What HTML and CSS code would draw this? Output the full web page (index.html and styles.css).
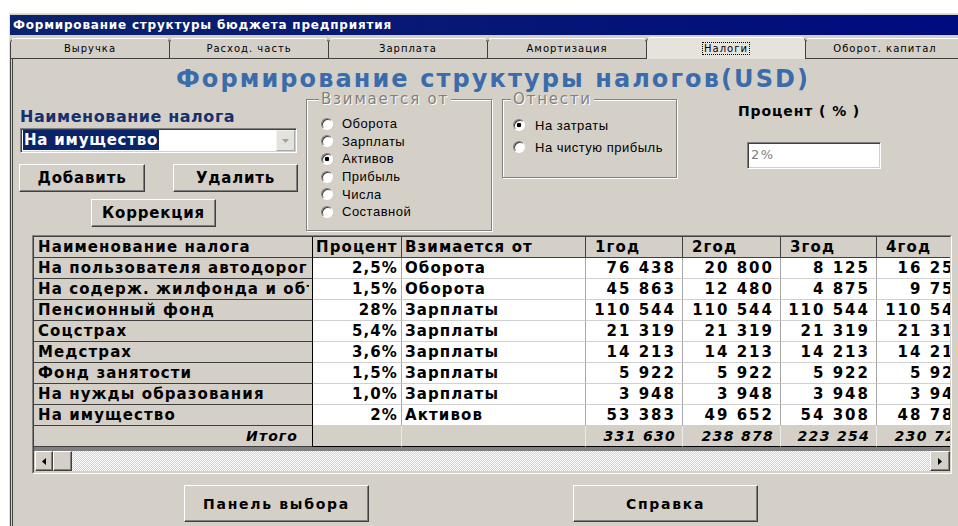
FILE: index.html
```html
<!DOCTYPE html>
<html lang="ru">
<head>
<meta charset="utf-8">
<title>Формирование структуры бюджета предприятия</title>
<link rel="stylesheet" href="styles.css">
</head>
<body>
<div class="window">
  <div class="titlebar">Формирование структуры бюджета предприятия</div>

  <div class="tabs">
    <div class="tab">Выручка</div>
    <div class="tab">Расход. часть</div>
    <div class="tab">Зарплата</div>
    <div class="tab">Амортизация</div>
    <div class="tab active"><span class="focus">Налоги</span></div>
    <div class="tab">Оборот. капитал</div>
  </div>

  <div class="panel">
    <h1 class="heading">Формирование структуры налогов(USD)</h1>

    <div class="controls">
      <div class="tax">
        <div class="tax-label">Наименование налога</div>
        <div class="combo">
          <span class="combo-text">На имущество</span>
          <span class="combo-btn">
            <svg width="7" height="4" viewBox="0 0 7 4"><path d="M0 0h7L3.5 4z" fill="#a0a0a0"/></svg>
          </span>
        </div>
        <div class="btn-row">
          <button type="button" class="btn btn-add">Добавить</button>
          <button type="button" class="btn btn-del">Удалить</button>
        </div>
        <button type="button" class="btn btn-fix">Коррекция</button>
      </div>

      <fieldset class="group group-base">
        <legend>Взимается от</legend>
        <div class="radio"><span class="mark"></span>Оборота</div>
        <div class="radio"><span class="mark"></span>Зарплаты</div>
        <div class="radio checked"><span class="mark"></span>Активов</div>
        <div class="radio"><span class="mark"></span>Прибыль</div>
        <div class="radio"><span class="mark"></span>Числа</div>
        <div class="radio"><span class="mark"></span>Составной</div>
      </fieldset>

      <fieldset class="group group-target">
        <legend>Отнести</legend>
        <div class="radio checked"><span class="mark"></span>На затраты</div>
        <div class="radio"><span class="mark"></span>На чистую прибыль</div>
      </fieldset>

      <div class="percent">
        <div class="percent-label">Процент ( % )</div>
        <div class="percent-input">2%</div>
      </div>
    </div>

    <div class="grid">
      <div class="grid-inner">
        <div class="grid-view">
          <table class="taxes">
            <colgroup>
              <col class="c-name"><col class="c-pct"><col class="c-base">
              <col class="c-y1"><col class="c-y2"><col class="c-y3"><col class="c-y4">
            </colgroup>
            <thead>
              <tr>
                <th class="fixed">Наименование налога</th>
                <th>Процент</th>
                <th>Взимается от</th>
                <th class="year">1год</th>
                <th class="year">2год</th>
                <th class="year">3год</th>
                <th class="year">4год</th>
              </tr>
            </thead>
            <tbody>
              <tr><td class="fixed"><div class="cell-clip">На пользователя автодорог</div></td><td class="pct">2,5%</td><td>Оборота</td><td class="num">76 438</td><td class="num">20 800</td><td class="num">8 125</td><td class="num">16 250</td></tr>
              <tr><td class="fixed"><div class="cell-clip">На содерж. жилфонда и объектов</div></td><td class="pct">1,5%</td><td>Оборота</td><td class="num">45 863</td><td class="num">12 480</td><td class="num">4 875</td><td class="num">9 750</td></tr>
              <tr><td class="fixed">Пенсионный фонд</td><td class="pct">28%</td><td>Зарплаты</td><td class="num">110 544</td><td class="num">110 544</td><td class="num">110 544</td><td class="num">110 544</td></tr>
              <tr><td class="fixed">Соцстрах</td><td class="pct">5,4%</td><td>Зарплаты</td><td class="num">21 319</td><td class="num">21 319</td><td class="num">21 319</td><td class="num">21 319</td></tr>
              <tr><td class="fixed">Медстрах</td><td class="pct">3,6%</td><td>Зарплаты</td><td class="num">14 213</td><td class="num">14 213</td><td class="num">14 213</td><td class="num">14 213</td></tr>
              <tr><td class="fixed">Фонд занятости</td><td class="pct">1,5%</td><td>Зарплаты</td><td class="num">5 922</td><td class="num">5 922</td><td class="num">5 922</td><td class="num">5 922</td></tr>
              <tr><td class="fixed">На нужды образования</td><td class="pct">1,0%</td><td>Зарплаты</td><td class="num">3 948</td><td class="num">3 948</td><td class="num">3 948</td><td class="num">3 948</td></tr>
              <tr><td class="fixed">На имущество</td><td class="pct">2%</td><td>Активов</td><td class="num">53 383</td><td class="num">49 652</td><td class="num">54 308</td><td class="num">48 780</td></tr>
            </tbody>
            <tfoot>
              <tr><td class="fixed total-label">Итого</td><td></td><td></td><td class="num">331 630</td><td class="num">238 878</td><td class="num">223 254</td><td class="num">230 726</td></tr>
            </tfoot>
          </table>
        </div>
        <div class="hscroll">
          <span class="sb-btn sb-left">
            <svg width="4" height="7" viewBox="0 0 4 7"><path d="M4 0v7L0 3.5z" fill="#000"/></svg>
          </span>
          <span class="sb-thumb"></span>
          <span class="sb-track"></span>
          <span class="sb-btn sb-right">
            <svg width="4" height="7" viewBox="0 0 4 7"><path d="M0 0v7l4-3.5z" fill="#000"/></svg>
          </span>
        </div>
      </div>
    </div>

    <div class="footer">
      <button type="button" class="btn btn-wide">Панель выбора</button>
      <button type="button" class="btn btn-wide">Справка</button>
    </div>
  </div>
</div>
</body>
</html>
```

FILE: styles.css
```css
* {
  box-sizing: border-box;
}

html,
body {
  margin: 0;
  padding: 0;
}

body {
  width: 958px;
  height: 526px;
  overflow: hidden;
  background: #fff;
  font-family: "Liberation Sans", Arial, sans-serif;
  color: #000;
}

/* ---------- window frame ---------- */
.window {
  display: flex;
  flex-direction: column;
  width: 966px;
  height: 513px;
  margin: 13px 0 0 9px;
  padding-top: 1px;
  background: #d4d0c8;
  border-top: 1px solid #e4e1da;
  border-left: 1px solid #e4e1da;
}

.titlebar {
  height: 20px;
  padding-left: 3px;
  background: linear-gradient(90deg, #0c236c, #000a80);
  color: #fff;
  font: bold 12px/20px "DejaVu Sans", sans-serif;
  letter-spacing: 0.8px;
  white-space: nowrap;
}

/* ---------- tab strip ---------- */
.tabs {
  display: flex;
  align-items: flex-end;
  width: 955px;
  height: 24px;
}

.tab {
  flex: 1;
  height: 21px;
  border: 1px solid #404040;
  border-top-color: #fff;
  border-radius: 5px 5px 0 0;
  font: 10px/19px "DejaVu Sans", sans-serif;
  letter-spacing: 1px;
  text-align: center;
  white-space: nowrap;
}

.tab + .tab {
  margin-left: -1px;
}

.tab.active {
  height: 22px;
  border-bottom: none;
  background: #e6e3dc;
  line-height: 21px;
}

.focus {
  outline: 1px dotted #000;
  outline-offset: 0;
  padding: 0 1px;
}

/* ---------- page panel ---------- */
.panel {
  flex: 1;
  border-left: 3px double #404040;
  padding-left: 6px;
}

.heading {
  margin: 7px 8px 0 0;
  height: 26px;
  color: #3a6cab;
  font: bold 24px/26px "DejaVu Sans", sans-serif;
  letter-spacing: 2.1px;
  text-align: center;
  white-space: nowrap;
}

.controls {
  display: flex;
  align-items: flex-start;
  height: 139px;
}

/* tax selector column */
.tax {
  width: 279px;
  margin-top: 16px;
}

.tax-label {
  padding-left: 1px;
  color: #17306e;
  font: bold 16px/18px "DejaVu Sans", sans-serif;
  letter-spacing: 0.55px;
  white-space: nowrap;
}

.combo {
  display: flex;
  width: 277px;
  height: 25px;
  margin: 2px 0 0 1px;
  padding: 1px;
  background: #fff;
  border: 1px solid;
  border-color: #808080 #fff #fff #808080;
  box-shadow: inset 1px 1px 0 #404040, inset -1px -1px 0 #d4d0c8;
}

.combo-text {
  height: 20px;
  margin: 0 0 0 1px;
  padding: 0 1px;
  background: #0a246a;
  color: #fff;
  font: bold 15px/20px "DejaVu Sans", sans-serif;
  letter-spacing: 0.8px;
  white-space: nowrap;
}

.combo-btn {
  display: flex;
  align-items: center;
  justify-content: center;
  width: 19px;
  height: 21px;
  margin-left: auto;
  background: #e4e2dd;
  border: 1px solid;
  border-color: #f4f3f0 #a8a8a8 #a8a8a8 #f4f3f0;
}

.btn {
  display: flex;
  align-items: center;
  justify-content: center;
  margin: 0;
  padding: 0;
  background: #d4d0c8;
  border: 1px solid;
  border-color: #fff #404040 #404040 #fff;
  box-shadow: inset -1px -1px 0 #808080;
  color: #000;
  font: bold 15px "DejaVu Sans", sans-serif;
  letter-spacing: 0.8px;
  white-space: nowrap;
}

.btn-row {
  display: flex;
  gap: 28px;
  margin-top: 11px;
}

.btn-add {
  width: 126px;
  height: 28px;
}

.btn-del {
  width: 125px;
  height: 28px;
}

.btn-fix {
  width: 125px;
  height: 28px;
  margin: 7px 0 0 72px;
}

/* radio groups */
.group {
  margin: 0;
  padding: 8px 0 0 14px;
  min-width: 0;
  border: 1px solid #808080;
  box-shadow: inset 1px 1px 0 #fff, 1px 1px 0 #fff;
}

.group legend {
  margin-left: -2px;
  padding: 0 2px;
  background: #d4d0c8;
  color: #808080;
  font: 15px/15px "DejaVu Sans", sans-serif;
  letter-spacing: 1.8px;
  text-shadow: 1px 1px 0 #fff;
  white-space: nowrap;
}

.group-base {
  width: 186px;
  height: 139px;
  margin-left: 8px;
}

.group-target {
  width: 175px;
  height: 86px;
  margin-left: 10px;
  padding-top: 7px;
  padding-left: 10px;
}

.radio {
  display: flex;
  align-items: center;
  gap: 9px;
  height: 17.6px;
  font-size: 13px;
  letter-spacing: 0.5px;
  white-space: nowrap;
}

.group-target .radio {
  height: 22px;
  gap: 10px;
}

.mark {
  flex: none;
  width: 12px;
  height: 12px;
  border-radius: 50%;
  border: 1px solid;
  border-color: #808080 #fff #fff #808080;
  background: #fff;
  box-shadow: inset 1px 1px 0 #404040;
}

.radio.checked .mark {
  background: radial-gradient(circle, #000 0 2px, #fff 2.6px);
}

/* percent entry */
.percent {
  margin: 11px 0 0 61px;
}

.percent-label {
  font: bold 14px/17px "DejaVu Sans", sans-serif;
  letter-spacing: 0.9px;
  white-space: nowrap;
}

.percent-input {
  width: 134px;
  height: 27px;
  margin: 22px 0 0 9px;
  padding: 3px 0 0 3px;
  background: #fff;
  border: 1px solid;
  border-color: #808080 #fff #fff #808080;
  box-shadow: inset 1px 1px 0 #404040, inset -1px -1px 0 #d4d0c8;
  color: #808080;
  font: 13px/18px "DejaVu Sans", sans-serif;
  letter-spacing: 1.5px;
}

/* ---------- string grid ---------- */
.grid {
  width: 920px;
  height: 239px;
  margin: 4px 0 0 13px;
  border: 1px solid;
  border-color: #808080 #fff #fff #808080;
}

.grid-inner {
  display: flex;
  flex-direction: column;
  height: 100%;
  overflow: hidden;
  border: 1px solid;
  border-color: #404040 #d4d0c8 #d4d0c8 #404040;
}

.grid-view {
  height: 214px;
  overflow: hidden;
  border-bottom: 4px solid #808080;
}

.taxes {
  width: 940px;
  table-layout: fixed;
  border-collapse: separate;
  border-spacing: 0;
  font: bold 15px "DejaVu Sans", sans-serif;
  letter-spacing: 1.1px;
}

.c-name { width: 279px; }
.c-pct { width: 89px; }
.c-base { width: 184px; }
.c-y1 { width: 97px; }
.c-y2 { width: 98px; }
.c-y3 { width: 96px; }
.c-y4 { width: 97px; }

.taxes th,
.taxes td {
  height: 21px;
  padding: 0 3px;
  overflow: hidden;
  white-space: nowrap;
  text-align: left;
  font-weight: bold;
  line-height: 20px;
  background: #fff;
  border-right: 1px solid #a8a8a8;
  border-bottom: 1px solid #d0d0d0;
}

.taxes th {
  background: #d4d0c8;
  border-right-color: #404040;
  border-bottom-color: #404040;
}

.taxes th.year {
  padding-left: 9px;
}

.taxes .fixed {
  padding-left: 4px;
  background: #d4d0c8;
  border-right-color: #000;
  border-bottom-color: #404040;
}

.cell-clip {
  overflow: hidden;
  text-overflow: clip;
}

.taxes td.pct {
  text-align: right;
}

.taxes td.num {
  padding-right: 6px;
  text-align: right;
  letter-spacing: 2px;
}

.taxes tfoot td {
  background: #d4d0c8;
  border-right-color: #ecebe8;
  border-bottom-color: #000;
  font-style: italic;
  font-size: 14px;
}

.taxes tfoot td.num {
  letter-spacing: 1.3px;
}

.taxes tfoot .total-label {
  padding-right: 14px;
  text-align: right;
  border-right-color: #000;
}

/* horizontal scroll bar */
.hscroll {
  display: flex;
  height: 20px;
  padding-left: 1px;
}

.sb-btn,
.sb-thumb {
  display: flex;
  align-items: center;
  justify-content: center;
  flex: none;
  height: 20px;
  background: #d4d0c8;
  border: 1px solid;
  border-color: #fff #404040 #404040 #fff;
  box-shadow: inset -1px -1px 0 #808080;
}

.sb-left {
  width: 18px;
}

.sb-thumb {
  width: 19px;
}

.sb-right {
  width: 20px;
}

.sb-track {
  flex: 1;
  background: repeating-conic-gradient(#fff 0 25%, #d4d0c8 0 50%) 0 0 / 2px 2px;
}

/* ---------- bottom buttons ---------- */
.footer {
  display: flex;
  gap: 204px;
  margin-top: 11px;
  padding-left: 165px;
}

.btn-wide {
  width: 185px;
  height: 37px;
  font-size: 14px;
  letter-spacing: 1.7px;
}
```
